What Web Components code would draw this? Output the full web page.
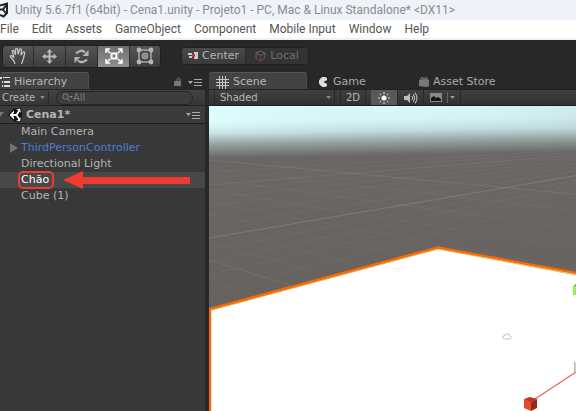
<!DOCTYPE html>
<html lang="en">
<head>
<meta charset="utf-8">
<title>Unity editor</title>
<style>
html,body{height:100%;margin:0}
body{background:#282828;overflow:hidden}
</style>
</head>
<body>
<unity-editor></unity-editor>
<script>
const define = (name, html, setup) => customElements.define(name, class extends HTMLElement {
  constructor() {
    super();
    const root = this.attachShadow({mode: 'open'});
    const t = document.createElement('template');
    t.innerHTML = html;
    root.append(t.content.cloneNode(true));
  }
  connectedCallback() { if (setup) setup(this, this.shadowRoot); }
});

define('title-bar', `<style>
:host{display:flex;height:20px;align-items:center;background:#eef3fa;color:#8b8b8b;font:12px/16px Roboto,"Noto Sans",sans-serif;white-space:nowrap;overflow:hidden}
svg{width:9px;height:16px;margin-right:6px;flex:none}
</style>
<svg viewBox="0 0 9 16" fill="none" stroke="#222" stroke-width="2"><path d="M0 3.5L7 1.5V11L3.5 14.5L0 13M0 7.5H3L7 2M3 7.5L6.5 12"/></svg><span><slot></slot></span>`);

define('menu-bar', `<style>
:host{display:flex;height:18px;align-items:center;gap:13px;background:#fff;border-bottom:2px solid #f0f0f0;overflow:hidden}
::slotted(button){all:unset;flex:none;color:#555;font:12px/16px Roboto,"Noto Sans",sans-serif;white-space:nowrap}
</style><slot></slot>`);

define('tool-strip', `<style>
:host{display:flex;align-items:center;height:32px;box-sizing:border-box;padding:0 2px;background:#282828;gap:20px}
.group{display:flex;border-radius:4px;overflow:hidden;border:1px solid #202020;box-sizing:border-box}
button{all:unset;box-sizing:border-box;display:flex;align-items:center;justify-content:center;background:linear-gradient(#555,#3d3d3d);border-left:1px solid #2c2c2c;color:#b4b4b4;font:11px/16px "DejaVu Sans",sans-serif}
button:first-child{border-left:0}
.tools{height:23px}.tools button{width:32px}.tools button:first-child{width:30px}.tools button:last-child{width:31px}
.tools button[aria-pressed=true]{background:linear-gradient(#6e6e6e,#909090)}
.mode{height:18px}.mode button{width:63px;gap:4px;background:linear-gradient(#484848,#3a3a3a)}
.mode button:last-child{color:#707070;background:#333}
svg{flex:none}
</style>
<div class="group tools" role="group" aria-label="Transform tools">
<button aria-label="Hand"><svg width="18" height="18" viewBox="0 0 18 18" fill="none" stroke="#c6c6c6" stroke-width="1.2" stroke-linejoin="round"><path d="M6 17L5 14L1.5 10Q.8 8.5 2.3 8.5L5 10.5L3.3 4.5Q3.3 3 4.8 3.5L6.500 7.5L6.700 2Q7.500.5 8.600 2L9.200 7L10.600 2.200Q12 1.200 12.400 2.800L12 8L14.200 5Q15.600 4.500 15.700 6L14.300 12L12.500 17"/></svg></button>
<button aria-label="Move"><svg width="15" height="15" viewBox="0 0 15 15" fill="#b8b8b8"><path d="M7.5 0L10.5 3.5H8.5V6.5H11.5V4.5L15 7.5L11.5 10.5V8.5H8.5V11.5H10.5L7.5 15L4.5 11.5H6.5V8.5H3.5V10.5L0 7.5L3.5 4.5V6.5H6.5V3.5H4.5Z"/></svg></button>
<button aria-label="Rotate"><svg width="15" height="15" viewBox="0 0 15 15" fill="none" stroke="#b4b4b4" stroke-width="2.2"><path d="M2 4.5Q7 -.5 11 3.5M13 10.5Q8 15.500 4 11.5"/><path d="M14.500 1V7H8.500ZM.5 14V8H6.500Z" fill="#b4b4b4" stroke="none"/></svg></button>
<button aria-label="Scale" aria-pressed="true"><svg width="18" height="16" viewBox="0 0 18 16" fill="none" stroke="#fff" stroke-width="1.500"><path stroke-width="2" d="M6.500 5.500H11.500V10.500H6.500Z"/><path d="M1 5V1H5M1 1L5 5M13 1H17V5M17 1L13 5M1 11V15H5M1 15L5 11M13 15H17V11M17 15L13 11"/></svg></button>
<button aria-label="Rect"><svg width="18" height="18" viewBox="0 0 18 18" fill="none" stroke="#a8a8a8" stroke-width="1.500"><path d="M3 3H15V15H3Z"/><circle cx="9" cy="9" r="2.500"/><g fill="#b8b8b8" stroke="none"><circle cx="3" cy="3" r="2.400"/><circle cx="15" cy="3" r="2.400"/><circle cx="3" cy="15" r="2.400"/><circle cx="15" cy="15" r="2.400"/><circle cx="9" cy="9" r="1"/></g></svg></button>
</div>
<div class="group mode" role="group" aria-label="Handle">
<button><svg width="10" height="8" viewBox="0 0 10 8"><path fill="#ccc" d="M0 1H4V3H0ZM1 4H4V6H1ZM6 0H10V7H6Z"/><path fill="#c33" d="M4 2H7V5H4Z"/></svg>Center</button>
<button><svg width="11" height="12" viewBox="0 0 11 12" fill="none" stroke="#666"><path d="M5.500 1L10 3V8L5.500 11L1 8V3ZM1 3L5.500 5.500L10 3"/><path stroke="#7d3038" d="M1 8L5.500 11L10 8M5.500 5.500V11"/></svg>Local</button>
</div>`);

define('panel-tab', `<style>
:host{display:flex;box-sizing:border-box;align-items:center;height:17px;font:11px/16px "DejaVu Sans",sans-serif;color:#aaa;white-space:nowrap}
:host([active]){background:#424242;border-top:1px solid #565656;border-right:1px solid #4c4c4c;border-radius:3px 3px 0 0;color:#b8b8b8}
button{all:unset;display:flex;align-items:center;gap:4px;padding-top:2px}
</style><button role="tab"><slot name="icon"></slot><slot></slot></button>`);

define('hierarchy-panel', `<style>
:host{display:flex;flex-direction:column;background:#383838;color:#b4b4b4;font:11px/16px "DejaVu Sans",sans-serif;min-width:0}
.tabs{display:flex;background:#282828;height:17px;align-items:center}
panel-tab{width:89px}
.tools{margin-left:auto;padding:3px 3px 0 0;display:flex;gap:6px;align-items:center}
.bar{display:flex;height:17px;box-sizing:border-box;border-top:1px solid #262626;border-bottom:1px solid #222;background:linear-gradient(#424242,#363636);align-items:center}
button{all:unset}
.create{flex:none;width:46px;padding-left:2px;display:flex;align-items:center;justify-content:space-between;border-right:1px solid #2a2a2a;font-size:10px;line-height:14px}
.create svg{margin-right:3px;flex:none}
.search{display:flex;align-items:center;flex:1;min-width:0;margin:0 12px 0 7px;padding-left:5px;height:12px;border-radius:7px;border:1px solid #252525;background:#3d3d3d}
.search svg{flex:none}
input{all:unset;width:0;min-width:0;flex:1;font:10px/12px "DejaVu Sans",sans-serif;color:#bbb}
input::placeholder{color:#7c7c7c}
.root{display:flex;height:17px;align-items:center;border-bottom:1px solid #1e1e1e;background:#3b3b3b;gap:4px;padding-right:5px}
.root b{flex:1}
ul{list-style:none;margin:0;padding:0}
li{display:flex;height:16px;align-items:center;padding-left:9px}
li i{width:12px;height:16px;display:flex;align-items:center}
.prefab{color:#4a7edb}
.sel{background:#484848;color:#fff}
.mark{outline:2px solid #ee3a2f;outline-offset:1px;border-radius:2px;line-height:12px;padding-right:2px}
.arrow{margin:0 15px 0 12px;flex:1;min-width:0;display:flex;align-items:center}
.arrow svg{flex:none}
.arrow s{height:7px;flex:1;background:#f03b30}
</style>
<div class="tabs" role="tablist"><panel-tab active><svg slot="icon" width="10" height="10" viewBox="0 0 10 10" fill="#ddd"><path d="M0 0H2V2H0ZM3 0H10V1H3ZM2 4H3V6H2ZM4 4H10V6H4ZM2 8H3V10H2ZM4 8H10V10H4Z"/></svg>Hierarchy</panel-tab>
<div class="tools"><svg width="8" height="10" viewBox="0 0 8 10"><path fill="#777" d="M0 4H7V9H0Z"/><path d="M3 4V2Q4.500 0 6 2V4" fill="none" stroke="#777"/></svg><svg width="14" height="8" viewBox="0 0 14 8" fill="#aaa"><path d="M0 3H5L2.500 6ZM6 1H14V2H6ZM6 4H14V5H6ZM6 7H14V8H6Z"/></svg></div></div>
<div class="bar"><button class="create">Create<svg width="5" height="3"><path fill="#888" d="M0 0H5L2.500 3Z"/></svg></button>
<label class="search"><svg width="11" height="9" viewBox="0 0 11 9" fill="none" stroke="#888"><circle cx="3.500" cy="3.500" r="2.700"/><path d="M5.500 5.500L8 8.500"/><path d="M7 3H11L9 5Z" fill="#888" stroke="none"/></svg><input type="text" aria-label="Search" placeholder="All"></label></div>
<div class="root"><svg width="22" height="14" viewBox="0 0 22 14"><path fill="#777" d="M0 4H4L0 9Z"/><path fill="#101010" d="M8 7L14 .5H21L22 7L21 13.500H14Z"/><path fill="#fff" d="M9.500 7L14 2.500V5L12.500 6H16L18.500 2.300L16 1.500L20 .8L21 5L19.800 3.500L17.500 7L19.800 10.500L21 9L20 13.200L16 12.500L18.500 11.700L16 8H12.500L14 9V11.500Z"/></svg><b>Cena1*</b><svg width="14" height="8" viewBox="0 0 14 8" fill="#aaa"><path d="M0 2H5L2.500 5ZM6 1H14V2H6ZM6 4H14V5H6ZM6 7H14V8H6Z"/></svg></div>
<ul><li><i></i>Main Camera</li>
<li class="prefab"><i><svg width="9" height="10"><path fill="#707070" d="M1 0L9 5L1 10Z"/></svg></i>ThirdPersonController</li>
<li><i></i>Directional Light</li>
<li class="sel"><i></i><span class="mark">Chão</span><span class="arrow"><svg width="20" height="18" viewBox="0 0 20 18"><path fill="#f03b30" d="M0 9L20 0V18Z"/></svg><s></s></span></li>
<li><i></i>Cube (1)</li></ul>`);

define('scene-view', `<style>
:host{display:block;min-height:0;overflow:hidden;background:#655f5b}
svg{display:block;width:100%;height:100%}
</style>
<svg viewBox="0 0 367 305" preserveAspectRatio="xMinYMin slice" role="img" aria-label="Scene">
<defs>
<linearGradient id="sky" x1="0" y1="0" x2="0" y2="1"><stop offset="0" stop-color="#d8fbfd"/><stop offset=".35" stop-color="#d6f5f8"/><stop offset=".55" stop-color="#c2dcde"/><stop offset=".78" stop-color="#909a9a"/><stop offset="1" stop-color="#6b6868"/></linearGradient>
<linearGradient id="tint"><stop offset="0" stop-color="#e4ffff" stop-opacity=".6"/><stop offset=".5" stop-color="#d5eef2" stop-opacity="0"/><stop offset="1" stop-color="#b8ccd2" stop-opacity=".3"/></linearGradient>
<linearGradient id="fade" x1="0" y1="0" x2="0" y2="1"><stop offset=".3" stop-color="#fff"/><stop offset=".7" stop-color="#000"/></linearGradient>
<mask id="high"><rect y="-2" width="367" height="50" fill="url(#fade)"/></mask>
<linearGradient id="ground" x1="0" y1="0" x2="0" y2="1"><stop offset="0" stop-color="#6b6868"/><stop offset="1" stop-color="#655f59"/></linearGradient>
</defs>
<rect width="367" height="305" fill="url(#ground)"/>
<rect width="367" height="20" fill="#d6f9fb"/>
<g transform="skewY(-1)"><rect y="-2" width="367" height="54" fill="url(#sky)"/></g>
<rect y="-2" width="367" height="50" fill="url(#tint)" mask="url(#high)"/>
<g id="grid" stroke="#b0b4b0" fill="none"></g>
<path d="M1 310V203L229 141.500L372 168V310Z" fill="#fff" stroke="#ff6a00" stroke-width="2.500"/>
<path d="M3 204L229 143L367 169" fill="none" stroke="#c9a030" stroke-width=".7"/>
<path d="M294 231Q294 229 297 229Q299 226 301 230Q304 231 301 233H296Q293 233 294 231Z" fill="#fff" stroke="#b4c2ca"/>
<path d="M323 295L367 266" stroke="#e4655a" stroke-width="1.300"/>
<path fill="#e8472a" d="M315 293L322 295V305L315 302Z"/><path fill="#bd3421" d="M315 293L321 291L328 293L322 296Z"/><path fill="#922a1d" d="M328 293V302L322 305V296Z"/>
<path fill="#8ff54a" d="M364 180H367V189H364Z"/><path fill="#5fae38" d="M364 180L367 178V180Z"/>
<path fill="#d2d4dc" d="M365 256H367V266H365Z"/><path stroke="#b4b4c0" d="M365.500 256V266"/>
</svg>`, (host, root) => {
  const line = (x1, y1, x2, y2, o) => `<path d="M${x1} ${y1}L${x2} ${y2}" opacity="${o}"/>`;
  let out = '';
  for (const y of [66, 72, 79, 85, 92, 100, 109, 120, 132, 144, 156, 169, 187])
    out += line(0, y, 367, y + (30 - y) * 367 / 600, y === 132 ? .26 : y === 79 ? .15 : .08);
  for (const y of [54, 63, 73, 84, 96, 108, 122, 137, 154, 174])
    out += line(0, y, 367, y + (y - 11) * 367 / 460, y === 54 || y === 154 ? .18 : .07);
  root.getElementById('grid').innerHTML = out;
});

define('scene-panel', `<style>
:host{display:flex;flex-direction:column;min-width:0}
.tabs{display:flex;background:#282828;height:17px;gap:12px}
panel-tab:first-child{width:98px;padding-left:7px;box-sizing:border-box}
panel-tab:nth-child(2){width:88px}
.bar{display:flex;height:17px;box-sizing:border-box;border-top:1px solid #222;border-bottom:1px solid #1d1d1d;background:linear-gradient(#404040,#303030);padding-left:5px}
button,select{all:unset;box-sizing:border-box;color:#b8b8b8;font:10px/15px "DejaVu Sans",sans-serif;border-right:1px solid #272727;display:flex;align-items:center;justify-content:center}
.shade{display:flex;align-items:center;width:121px;border-left:1px solid #272727;border-right:1px solid #272727;box-sizing:border-box;margin-right:5px}
select{flex:1;padding-left:5px;border:0;justify-content:flex-start}
.shade svg{margin-right:3px;flex:none}
.d2{width:26px;border-left:1px solid #272727;margin-right:5px}
.on{width:27px;background:#585858}
.snd{width:26px}.fx{width:37px;gap:5px}
scene-view{flex:1}
</style>
<div class="tabs" role="tablist">
<panel-tab active><svg slot="icon" width="13" height="13" viewBox="0 0 13 13" stroke="#c8c8c8"><path d="M3.500 0V13M6.500 0V13M9.500 0V13M0 3.500H13M0 6.500H13M0 9.500H13"/></svg>Scene</panel-tab>
<panel-tab><svg slot="icon" width="10" height="10" viewBox="0 0 10 10"><path fill="#ddd" d="M8 1A5 5 0 1 0 8 9V7L4.500 5L8 3Z"/></svg>Game</panel-tab>
<panel-tab><svg slot="icon" width="10" height="12" viewBox="0 0 10 12"><path fill="#777" d="M0 4L8 3L10 4V10L8 11L0 10Z"/><path fill="none" stroke="#888" d="M2 5V2Q4 0 5 4M5 3Q8 -1 8 4"/></svg>Asset Store</panel-tab>
</div>
<div class="bar">
<label class="shade"><select aria-label="Draw mode"><option>Shaded</option></select><svg width="5" height="3"><path fill="#888" d="M0 0H5L2.500 3Z"/></svg></label>
<button class="d2">2D</button>
<button class="on" aria-label="Lighting"><svg width="12" height="12" viewBox="0 0 12 12" stroke="#ddd"><circle cx="6" cy="6" r="2.500" fill="#fff" stroke="none"/><path d="M6 0V2M6 10V12M0 6H2M10 6H12M1.700 1.700L3 3M9 9L10.300 10.300M10.300 1.700L9 3M3 9L1.700 10.300"/></svg></button>
<button class="snd" aria-label="Audio"><svg width="14" height="12" viewBox="0 0 14 12" fill="none" stroke="#ccc"><path fill="#bbb" stroke="none" d="M0 4H3L6 1V11L3 8H0Z"/><path d="M8 4Q9.500 6 8 8M9.500 2Q12 6 9.500 10M11 .5Q15 6 11 11.500"/></svg></button>
<button class="fx" aria-label="Effects"><svg width="12" height="9"><path fill="#888" d="M0 0H12V9H0Z"/><path fill="#151515" d="M1 8V5L4 3L6 5L8 4L11 6V8Z"/></svg><svg width="8" height="11"><path stroke="#666" d="M.5 0V11"/><path fill="#999" d="M3 4H8L5.500 7Z"/></svg></button>
</div>
<scene-view></scene-view>`);

define('unity-editor', `<style>
:host{display:flex;flex-direction:column;height:100%;background:#282828}
main{flex:1;display:grid;grid-template-columns:minmax(0,205fr) minmax(0,367fr);gap:4px;min-height:0}
</style>
<title-bar>Unity 5.6.7f1 (64bit) - Cena1.unity - Projeto1 - PC, Mac &amp; Linux Standalone* &lt;DX11&gt;</title-bar>
<menu-bar><button>File</button><button>Edit</button><button>Assets</button><button>GameObject</button><button>Component</button><button>Mobile Input</button><button>Window</button><button>Help</button></menu-bar>
<tool-strip></tool-strip>
<main><hierarchy-panel></hierarchy-panel><scene-panel></scene-panel></main>`);
</script>
</body>
</html>
